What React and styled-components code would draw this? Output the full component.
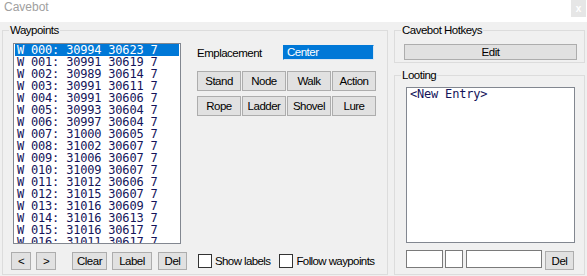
import React from 'react';
import styled, { createGlobalStyle } from 'styled-components';

const waypoints = [
  [30994, 30623], [30991, 30619], [30989, 30614], [30991, 30611],
  [30991, 30606], [30993, 30604], [30997, 30604], [31000, 30605],
  [31002, 30607], [31006, 30607], [31009, 30607], [31012, 30606],
  [31015, 30607], [31016, 30609], [31016, 30613], [31016, 30617],
  [31011, 30617],
];

const actions = ['Stand', 'Node', 'Walk', 'Action', 'Rope', 'Ladder', 'Shovel', 'Lure'];

const App = () => (
  <Window>
    <GlobalStyle />
    <TitleBar>
      <Title>Cavebot</Title>
      <Close>x</Close>
    </TitleBar>
    <Main>
      <Group $width="386px">
        <Legend>Waypoints</Legend>
        <WaypointsBody>
          <TopRow>
            <ListBox $width="168px" $height="201px">
              {waypoints.map(([x, y], i) => (
                <Row key={i} $selected={i === 0}>
                  {`W ${String(i).padStart(3, '0')}: ${x} ${y} 7`}
                </Row>
              ))}
            </ListBox>
            <Controls>
              <FieldRow>
                <FieldLabel>Emplacement</FieldLabel>
                <Combo>Center</Combo>
              </FieldRow>
              <ActionGrid>
                {actions.map((a) => (
                  <Button key={a} $width="44px" $height="20px">{a}</Button>
                ))}
              </ActionGrid>
            </Controls>
          </TopRow>
          <BottomRow>
            <Button $width="20px" $height="18px">&lt;</Button>
            <Button $width="20px" $height="18px" $gap="5px">&gt;</Button>
            <Button $width="35px" $height="18px" $gap="16px">Clear</Button>
            <Button $width="40px" $height="18px" $gap="5px">Label</Button>
            <Button $width="29px" $height="18px" $gap="6px">Del</Button>
            <Check $gap="11px">
              <Box />
              Show labels
            </Check>
            <Check $gap="9px">
              <Box />
              Follow waypoints
            </Check>
          </BottomRow>
        </WaypointsBody>
      </Group>
      <SideColumn>
        <Group>
          <Legend>Cavebot Hotkeys</Legend>
          <HotkeysBody>
            <Button $width="173px" $height="16px">Edit</Button>
          </HotkeysBody>
        </Group>
        <Group $grow>
          <Legend>Looting</Legend>
          <LootingBody>
            <ListBox $width="169px" $height="156px">
              <Row>&lt;New Entry&gt;</Row>
            </ListBox>
            <InputRow>
              <Input $width="37px" />
              <Input $width="18px" $gap="2px" />
              <Input $width="76px" $gap="3px" />
              <Button $width="29px" $height="19px" $gap="3px" $top="1px">Del</Button>
            </InputRow>
          </LootingBody>
        </Group>
      </SideColumn>
    </Main>
  </Window>
);

const GlobalStyle = createGlobalStyle`
  html, body {
    margin: 0;
    padding: 0;
    background: #f0f0f0;
  }
  body {
    font-family: "Liberation Sans", Arial, sans-serif;
    font-size: 11.5px;
    letter-spacing: -0.5px;
    color: #000;
  }
`;

const Window = styled.div`
  width: 587px;
  height: 276px;
  overflow: hidden;
  display: flex;
  flex-direction: column;
  background: #f0f0f0;
`;

const TitleBar = styled.div`
  height: 22px;
  flex-shrink: 0;
  background: #fff;
  display: flex;
  justify-content: space-between;
  align-items: flex-start;
`;

const Title = styled.span`
  font-size: 12px;
  line-height: 14px;
  letter-spacing: 0;
  color: #a0a0a0;
  padding-left: 4px;
`;

const Close = styled.span`
  width: 15px;
  height: 17px;
  margin-right: 1px;
  background: #e6e6e6;
  color: #fff;
  font-size: 10px;
  font-weight: bold;
  letter-spacing: 0;
  display: flex;
  align-items: center;
  justify-content: center;
`;

const Main = styled.div`
  flex: 1;
  display: flex;
  gap: 6px;
  padding: 2px 2px 1px 2px;
  min-height: 0;
`;

const Group = styled.fieldset`
  margin: 0;
  padding: 0;
  min-width: 0;
  box-sizing: border-box;
  border: 1px solid #dcdcdc;
  width: ${(p) => p.$width || 'auto'};
  flex: ${(p) => (p.$grow ? 1 : 'none')};
`;

const Legend = styled.legend`
  margin-left: 6px;
  padding: 0 1px;
  line-height: 13px;
  font-size: 11.5px;
`;

const WaypointsBody = styled.div`
  padding: 6px 0 0 10px;
  display: flex;
  flex-direction: column;
`;

const TopRow = styled.div`
  display: flex;
  gap: 16px;
`;

const ListBox = styled.div`
  width: ${(p) => p.$width};
  height: ${(p) => p.$height};
  box-sizing: border-box;
  border: 1px solid #828790;
  background: #fff;
  overflow: hidden;
  font-family: "DejaVu Sans Mono", "Liberation Mono", monospace;
  font-size: 12px;
  letter-spacing: -0.2px;
`;

const Row = styled.div`
  height: 12px;
  line-height: 12px;
  margin: 0 1px;
  padding-left: 2px;
  white-space: pre;
  color: ${(p) => (p.$selected ? '#fff' : '#14145a')};
  background: ${(p) => (p.$selected ? '#0078d7' : 'transparent')};
`;

const Controls = styled.div`
  display: flex;
  flex-direction: column;
  padding-top: 2px;
`;

const FieldRow = styled.div`
  display: flex;
  align-items: center;
`;

const FieldLabel = styled.span`
  width: 86px;
`;

const Combo = styled.div`
  width: 91px;
  height: 15px;
  box-sizing: border-box;
  background: #0078d7;
  border: 1px solid #d8e6f3;
  border-left-color: #0078d7;
  border-top-color: #0078d7;
  color: #fff;
  padding-left: 3px;
  line-height: 13px;
`;

const ActionGrid = styled.div`
  margin-top: 11px;
  display: grid;
  grid-template-columns: repeat(4, 44px);
  column-gap: 1px;
  row-gap: 5px;
`;

const Button = styled.div`
  width: ${(p) => p.$width};
  height: ${(p) => p.$height};
  margin-left: ${(p) => p.$gap || 0};
  margin-top: ${(p) => p.$top || 0};
  box-sizing: border-box;
  background: #e1e1e1;
  border: 1px solid #adadad;
  display: flex;
  align-items: center;
  justify-content: center;
  flex-shrink: 0;
`;

const BottomRow = styled.div`
  display: flex;
  align-items: center;
  margin: 8px 0 0 -2px;
`;

const Check = styled.label`
  display: flex;
  align-items: center;
  gap: 3px;
  margin-left: ${(p) => p.$gap};
  white-space: nowrap;
  letter-spacing: -0.6px;
`;

const Box = styled.span`
  width: 14px;
  height: 14px;
  box-sizing: border-box;
  border: 1px solid #333;
  background: #fff;
`;

const SideColumn = styled.div`
  width: 192px;
  display: flex;
  flex-direction: column;
  gap: 6px;
`;

const HotkeysBody = styled.div`
  padding: 7px 0 2px 9px;
`;

const LootingBody = styled.div`
  padding: 5px 0 0 11px;
`;

const InputRow = styled.div`
  display: flex;
  align-items: flex-start;
  margin-top: 7px;
`;

const Input = styled.div`
  width: ${(p) => p.$width};
  height: 18px;
  margin-left: ${(p) => p.$gap || 0};
  box-sizing: border-box;
  border: 1px solid #7a7a7a;
  background: #fff;
`;

export default App;
